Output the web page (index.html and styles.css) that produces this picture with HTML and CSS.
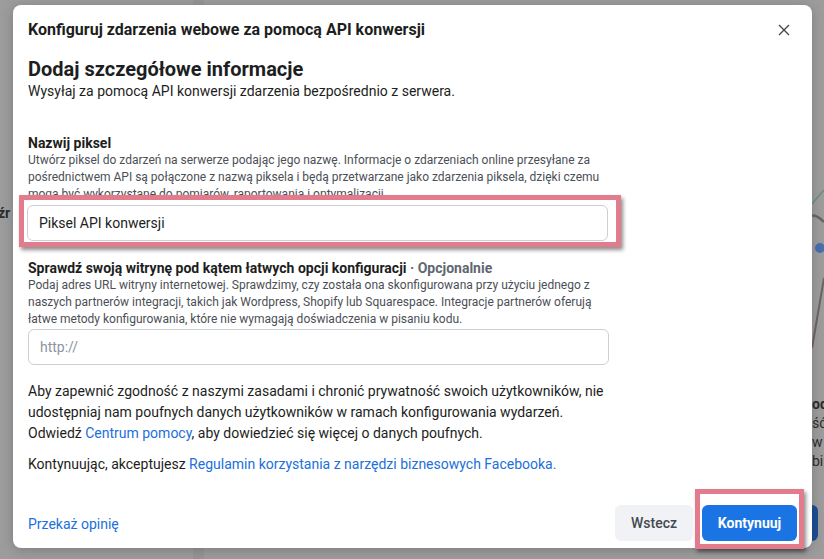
FILE: index.html
```html
<!DOCTYPE html>
<html lang="pl">
<head>
    <meta charset="UTF-8" />
    <meta name="viewport" content="width=device-width, initial-scale=1.0"/>
    <title>Konfiguruj zdarzenia webowe</title>
    <link rel="stylesheet" href="styles.css">
</head>
<body>

<div class="backdrop">
    <div class="backdrop-stripe"></div>
    <span class="backdrop-left">źr</span>
    <svg class="backdrop-map" width="14" height="200" viewBox="0 0 14 200">
        <path d="M0 28 L14 12" stroke="#5f8f80" stroke-width="1.2" fill="none"/>
        <path d="M0 38 Q6 36 14 44" stroke="#6f6560" stroke-width="2.5" fill="none"/>
        <path d="M2 170 L14 100" stroke="#6f6560" stroke-width="2" fill="none"/>
        <circle cx="10" cy="70" r="5" fill="#4a6fae"/>
        <path d="M0 205 L14 205" stroke="#b5b5b5" stroke-width="1"/>
    </svg>
    <div class="backdrop-right">
        <b>od</b>
        <span>ść</span>
        <span>w</span>
        <span>bi</span>
    </div>
    <div class="backdrop-button"></div>
</div>

<div class="modal">
    <div class="modal-header">
        <h1>Konfiguruj zdarzenia webowe za pomocą API konwersji</h1>
        <svg class="close-icon" width="12" height="12" viewBox="0 0 12 12">
            <path d="M1 1 L11 11 M11 1 L1 11" stroke="#444950" stroke-width="1.4" fill="none"/>
        </svg>
    </div>

    <div class="modal-body">
        <h2>Dodaj szczegółowe informacje</h2>
        <p class="subtitle">Wysyłaj za pomocą API konwersji zdarzenia bezpośrednio z serwera.</p>

        <div class="field field-first">
            <label for="pixel">Nazwij piksel</label>
            <p class="hint">Utwórz piksel do zdarzeń na serwerze podając jego nazwę. Informacje o zdarzeniach online przesyłane za pośrednictwem API są połączone z nazwą piksela i będą przetwarzane jako zdarzenia piksela, dzięki czemu mogą być wykorzystane do pomiarów, raportowania i optymalizacji.</p>
            <div class="highlight highlight-input">
                <input type="text" id="pixel" value="Piksel API konwersji" />
            </div>
        </div>

        <div class="field">
            <label for="site">Sprawdź swoją witrynę pod kątem łatwych opcji konfiguracji <span class="optional">· Opcjonalnie</span></label>
            <p class="hint">Podaj adres URL witryny internetowej. Sprawdzimy, czy została ona skonfigurowana przy użyciu jednego z naszych partnerów integracji, takich jak Wordpress, Shopify lub Squarespace. Integracje partnerów oferują łatwe metody konfigurowania, które nie wymagają doświadczenia w pisaniu kodu.</p>
            <input type="text" id="site" placeholder="http://" />
        </div>

        <p class="notice">Aby zapewnić zgodność z naszymi zasadami i chronić prywatność swoich użytkowników, nie udostępniaj nam poufnych danych użytkowników w ramach konfigurowania wydarzeń. Odwiedź <a href="#">Centrum pomocy</a>, aby dowiedzieć się więcej o danych poufnych.</p>

        <p class="notice terms">Kontynuując, akceptujesz <a href="#">Regulamin korzystania z narzędzi biznesowych Facebooka.</a></p>
    </div>

    <div class="modal-footer">
        <a href="#" class="feedback">Przekaż opinię</a>
        <div class="actions">
            <button class="btn btn-secondary">Wstecz</button>
            <div class="highlight highlight-button">
                <button class="btn btn-primary">Kontynuuj</button>
            </div>
        </div>
    </div>
</div>

</body>
</html>
```

FILE: styles.css
```css
* {
    box-sizing: border-box;
}

body {
    margin: 0;
    padding: 0;
    height: 559px;
    overflow: hidden;
    position: relative;
    background-color: #9c9c9c;
    font-family: Roboto, 'Liberation Sans', Arial, sans-serif;
    color: #1c1e21;
}

/* page behind the dimmed overlay */
.backdrop {
    position: absolute;
    inset: 0;
}

.backdrop-stripe {
    position: absolute;
    left: 193px;
    top: 0;
    width: 11px;
    height: 100%;
    background-color: #959595;
}

.backdrop-left {
    position: absolute;
    left: -2px;
    top: 205px;
    font-size: 14px;
    font-weight: 700;
    color: #2d2d2d;
}

.backdrop-map {
    position: absolute;
    left: 810px;
    top: 178px;
}

.backdrop-right {
    position: absolute;
    left: 812px;
    top: 395px;
    display: flex;
    flex-direction: column;
    font-size: 14px;
    line-height: 19px;
    color: #2d2d2d;
}

.backdrop-button {
    position: absolute;
    left: 800px;
    top: 505px;
    width: 18px;
    height: 36px;
    border-radius: 6px;
    background-color: #1d4f93;
}

.modal {
    position: relative;
    z-index: 1;
    width: 799px;
    height: 543px;
    margin: 5px 0 0 13px;
    background-color: #ffffff;
    border-radius: 8px;
    box-shadow: 0 2px 12px rgba(0, 0, 0, 0.2);
    display: flex;
    flex-direction: column;
}

.modal-header {
    display: flex;
    justify-content: space-between;
    align-items: center;
    padding: 15px 22px 0 15px;
}

h1 {
    margin: 0;
    font-size: 16px;
    line-height: 20px;
    font-weight: 700;
}

.close-icon {
    display: block;
}

.modal-body {
    padding: 0 200px 0 15px;
}

h2 {
    margin: 17px 0 0;
    font-size: 20px;
    line-height: 24px;
    font-weight: 700;
}

.subtitle {
    margin: 0;
    font-size: 14px;
    line-height: 20px;
}

.field {
    display: flex;
    flex-direction: column;
    margin-top: 12px;
}

.field-first {
    margin-top: 33px;
}

label {
    font-size: 14px;
    line-height: 18px;
    font-weight: 700;
}

.optional {
    color: #606770;
}

.hint {
    margin: 0;
    font-size: 12px;
    line-height: 17px;
    color: #4b4f56;
}

input[type="text"] {
    width: 581px;
    height: 36px;
    margin-top: 1px;
    padding: 0 11px;
    border: 1px solid #ccd0d5;
    border-radius: 6px;
    font-family: inherit;
    font-size: 14px;
    color: #1c1e21;
    background-color: #ffffff;
}

input::placeholder {
    color: #8d949e;
}

/* pasted annotation frames */
.highlight {
    position: relative;
    background-color: #ffffff;
    border: 5px solid #e27b8c;
    box-shadow: 2px 3px 4px rgba(0, 0, 0, 0.45);
}

.highlight-input {
    width: 602px;
    margin: -8px 0 0 -9px;
    padding: 5px 0 1px 3px;
}

.highlight-input input[type="text"] {
    margin-top: 0;
}

.notice {
    margin: 16px 0 0;
    font-size: 14px;
    line-height: 21px;
}

.terms {
    margin-top: 10px;
}

a {
    color: #216fdb;
    text-decoration: none;
}

.modal-footer {
    margin-top: auto;
    display: flex;
    justify-content: space-between;
    align-items: flex-end;
    padding: 0 8px 0 15px;
    margin-bottom: -1px;
}

.feedback {
    font-size: 14px;
    line-height: 20px;
    margin-bottom: 15px;
}

.actions {
    display: flex;
    align-items: flex-end;
    gap: 2px;
}

.btn {
    height: 36px;
    border: none;
    border-radius: 6px;
    font-family: inherit;
    font-size: 14px;
    cursor: pointer;
}

.btn-secondary {
    width: 78px;
    margin-bottom: 8px;
    background-color: #f0f2f5;
    color: #444950;
    font-weight: 500;
}

.highlight-button {
    padding: 11px 2px 3px 2px;
}

.btn-primary {
    display: block;
    width: 95px;
    background-color: #1b74e4;
    color: #ffffff;
    font-weight: 700;
}
```
